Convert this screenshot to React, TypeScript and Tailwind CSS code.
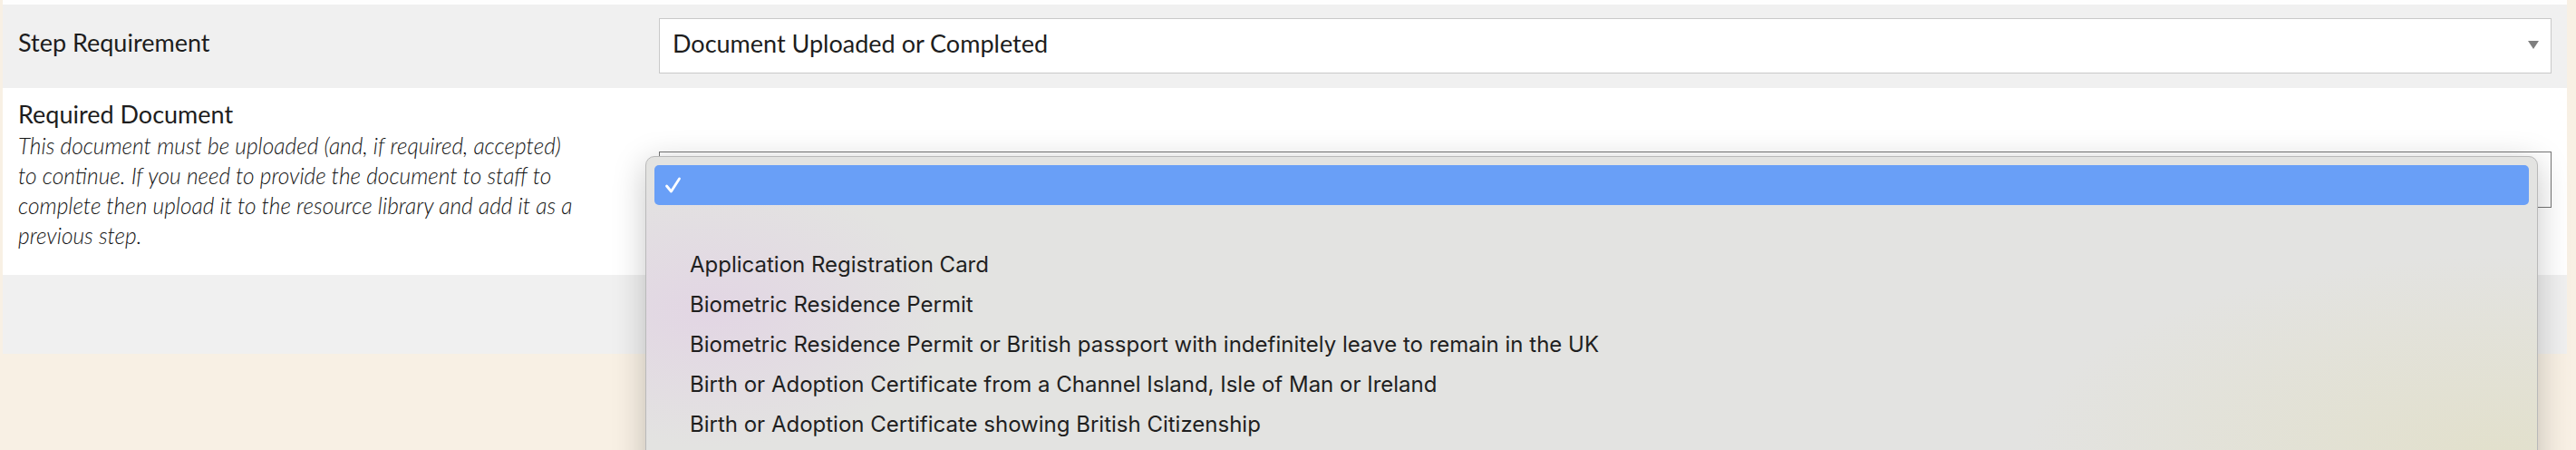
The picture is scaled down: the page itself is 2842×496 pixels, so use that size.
import React from "react";

const options = [
  "Application Registration Card",
  "Biometric Residence Permit",
  "Biometric Residence Permit or British passport with indefinitely leave to remain in the UK",
  "Birth or Adoption Certificate from a Channel Island, Isle of Man or Ireland",
  "Birth or Adoption Certificate showing British Citizenship",
];

export default function App() {
  return (
    <div className="relative h-[496px] w-[2842px] overflow-hidden bg-[#f8f0e4] font-['Lato',sans-serif] text-[#1d1d1d]">
      <div className="ml-[3px] w-[2829px]">
        <div className="h-[5px] bg-[#fefefe]" />
        {/* Step Requirement row */}
        <div className="grid h-[92px] grid-cols-[707px_1fr] bg-[#f0f0f0] px-[17px]">
          <div className="pt-[28px] text-[27px] leading-[27px]">Step Requirement</div>
          <div className="pt-[15px]">
            <div className="relative h-[61px] border border-[#c9c9c9] bg-white pl-[14px] pt-[13px] text-[27px] leading-[27px]">
              Document Uploaded or Completed
              <svg
                className="absolute right-[13px] top-[24px]"
                width="12"
                height="9"
                viewBox="0 0 12 9"
              >
                <polygon points="0,0 12,0 6,9" fill="#7f7f7f" />
              </svg>
            </div>
          </div>
        </div>
        {/* Required Document row */}
        <div className="grid h-[206px] grid-cols-[707px_1fr] bg-white px-[17px]">
          <div className="pt-[15px]">
            <div className="text-[27px] leading-[27px]">Required Document</div>
            <div className="mt-[5px] whitespace-nowrap text-[24.5px] font-light italic leading-[33px] text-[#151515]">
              <div>This document must be uploaded (and, if required, accepted)</div>
              <div>to continue. If you need to provide the document to staff to</div>
              <div>complete then upload it to the resource library and add it as a</div>
              <div>previous step.</div>
            </div>
          </div>
          <div className="pt-[70px]">
            <div className="h-[62px] border border-[#767676] bg-white" />
          </div>
        </div>
        <div className="h-[87px] bg-[#f0f0f0]" />
      </div>

      {/* Native select popup */}
      <div className="absolute left-[712px] top-[172px] h-[360px] w-[2088px] rounded-[10px] border border-[#b9b9b9] bg-[#e3e3e1] bg-[radial-gradient(260px_150px_at_70px_170px,rgba(226,212,228,0.9),transparent),radial-gradient(520px_220px_at_2040px_330px,rgba(226,224,204,1),transparent)] px-[9px] pt-[9px] font-['Inter',sans-serif] text-[24px] text-[#1f1f1f] shadow-[0_8px_36px_rgba(0,0,0,0.22)]">
        <div className="flex h-[44px] items-center rounded-[5px] bg-[#699ff7] pl-[11px]">
          <svg width="19" height="18" viewBox="0 0 19 18">
            <path
              d="M2.5 10 L7.5 16 L16.5 2"
              stroke="white"
              strokeWidth="2.8"
              fill="none"
              strokeLinecap="round"
              strokeLinejoin="round"
            />
          </svg>
        </div>
        <div className="h-[44px]" />
        {options.map((o) => (
          <div key={o} className="flex h-[44px] items-center whitespace-nowrap pl-[39px]">
            {o}
          </div>
        ))}
      </div>
    </div>
  );
}
